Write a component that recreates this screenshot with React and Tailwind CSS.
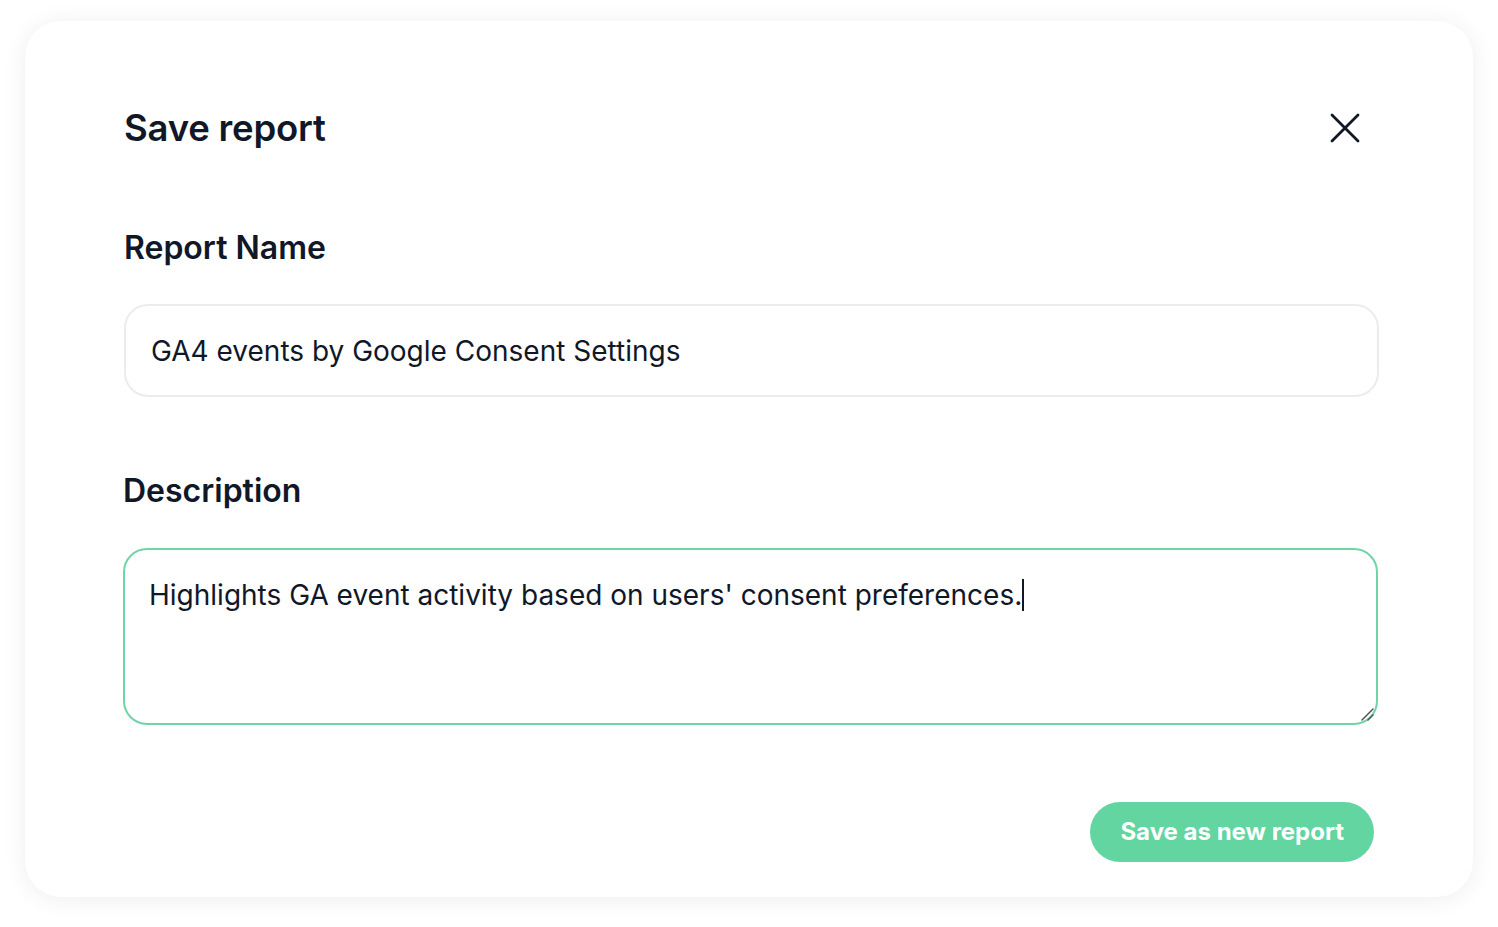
const App = () => {
  return (
    <div className="min-h-screen bg-white pt-[21px] pl-[25px] pr-[25px]" style={{ fontFamily: 'Inter, "Noto Sans", sans-serif' }}>
      <div className="w-[1448px] h-[876px] bg-white rounded-[36px] shadow-[0_2px_24px_rgba(0,0,0,0.07)] pl-[99px] pr-[94px] pt-[83px]">
        {/* Header */}
        <div className="flex items-center justify-between pr-[19px]">
          <h1 className="text-[36.5px] leading-[48px] font-semibold text-[#101828] tracking-[-0.2px]">Save report</h1>
          <button className="text-[#101828]">
            <svg width="30" height="30" viewBox="0 0 30 30" fill="none">
              <path d="M2 2 L28 28 M28 2 L2 28" stroke="currentColor" strokeWidth="2.8" strokeLinecap="round" />
            </svg>
          </button>
        </div>

        {/* Report name */}
        <div className="mt-[76px]">
          <label className="block text-[32px] leading-[40px] font-semibold text-[#101828]">Report Name</label>
          <div className="mt-[36px] h-[93px] rounded-[24px] border-2 border-[#ececef] flex items-center px-[25px]">
            <span className="text-[28px] text-[#101828]">GA4 events by Google Consent Settings</span>
          </div>
        </div>

        {/* Description */}
        <div className="mt-[74px]">
          <label className="block text-[32px] leading-[40px] font-semibold text-[#101828] -ml-px">Description</label>
          <div className="relative mt-[37px] -ml-px mr-px h-[177px] rounded-[24px] border-2 border-[#6dd5a6] px-[24px] pt-[26px]">
            <span className="text-[28px] leading-[38px] text-[#101828]">
              Highlights GA event activity based on users' consent preferences.
            </span>
            <span className="inline-block w-[2px] h-[32px] bg-[#101828] align-[-6px]" />
            <svg className="absolute right-[2px] bottom-[2px]" width="16" height="16" viewBox="0 0 16 16">
              <path d="M15 4 L4 15 M15 10 L10 15" stroke="#555" strokeWidth="1.5" strokeLinecap="round" />
            </svg>
          </div>
        </div>

        {/* Footer */}
        <div className="flex justify-end mt-[77px] pr-[5px]">
          <button className="h-[60px] px-[30px] rounded-[30px] bg-[#62d5a1] text-white text-[24px] font-bold">
            Save as new report
          </button>
        </div>
      </div>
    </div>
  );
};

export default App;
